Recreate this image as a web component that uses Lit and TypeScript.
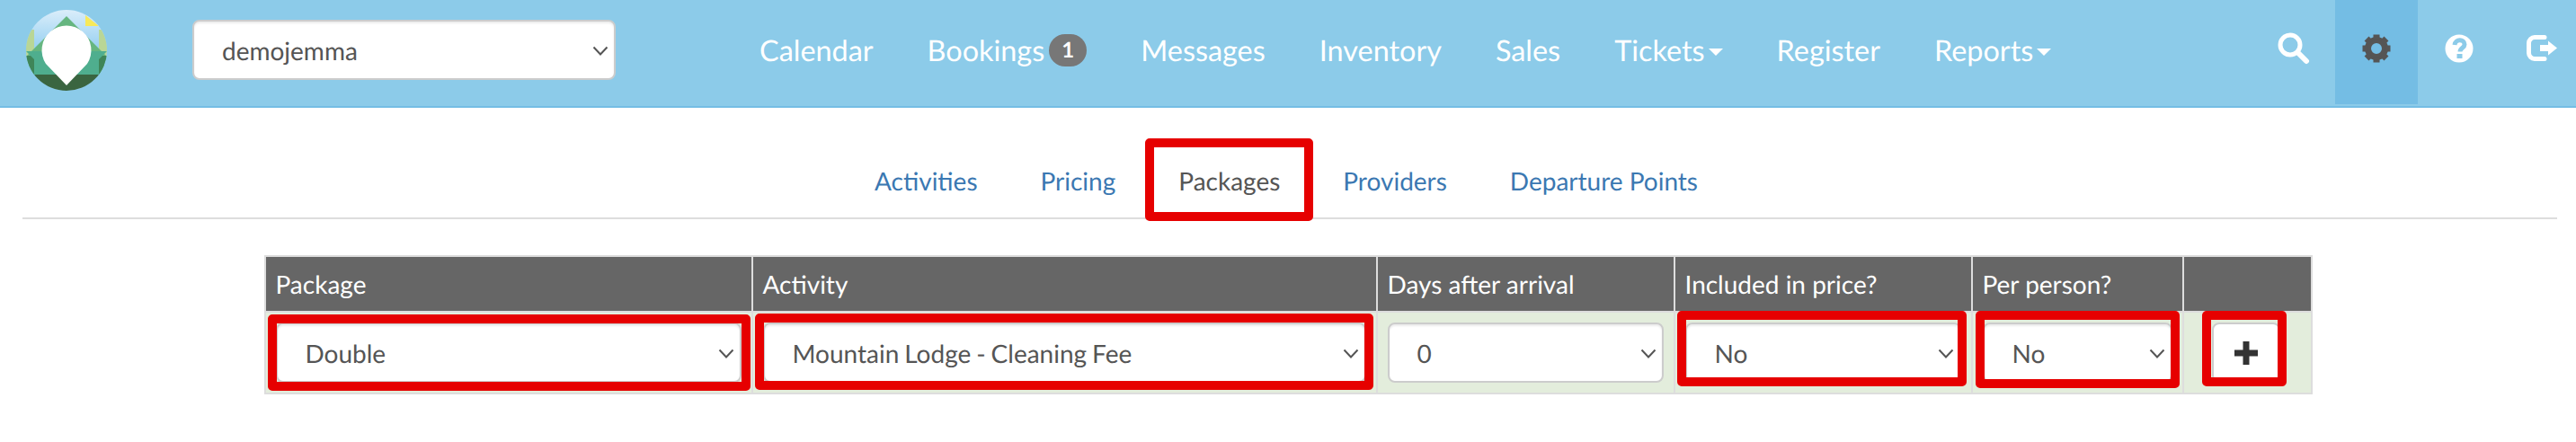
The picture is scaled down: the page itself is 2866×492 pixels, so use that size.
import { LitElement, html, css, svg } from 'lit';
import { customElement } from 'lit/decorators.js';

const chevron = html`<svg class="chev" width="18" height="11" viewBox="0 0 18 11"><path d="M1.5 1.5 9 9.5l7.5-8" fill="none" stroke="#555" stroke-width="2"/></svg>`;

const gearTeeth = [0, 45, 90, 135, 180, 225, 270, 315];

@customElement('app-root')
export class AppRoot extends LitElement {
    static styles = css`
        :host {
            display: block;
            width: 2866px;
            height: 492px;
            background: #fff;
            font-family: Lato, "Open Sans", sans-serif;
            color: #555;
            overflow: hidden;
            text-rendering: geometricPrecision;
        }
        .top {
            display: flex;
            align-items: flex-start;
            height: 118px;
            background: #8ccbe9;
            border-bottom: 2px solid #74bde4;
        }
        .logo {
            margin: 10px 0 0 28px;
            flex: none;
        }
        .account {
            margin: 22px 0 0 94px;
            width: 471px;
            height: 67px;
            flex: none;
        }
        .nav {
            display: flex;
            gap: 60px;
            margin: 33px 0 0 160px;
            color: #fff;
            font-size: 32.4px;
            line-height: 46px;
            white-space: nowrap;
        }
        .nav a {
            display: flex;
            align-items: center;
        }
        .badge {
            display: block;
            width: 42px;
            height: 36px;
            margin-left: 5px;
            border-radius: 18px;
            background: #777;
            color: #fff;
            font-size: 24px;
            font-weight: 700;
            line-height: 36px;
            text-align: center;
        }
        .caret {
            width: 0;
            height: 0;
            margin: 4px 0 0 4px;
            border-left: 8px solid transparent;
            border-right: 8px solid transparent;
            border-top: 8px solid #fff;
        }
        .icons {
            display: flex;
            flex: none;
            margin-left: auto;
            margin-right: -8px;
        }
        .icon {
            display: flex;
            width: 92px;
            height: 116px;
            padding-bottom: 8px;
            box-sizing: border-box;
            align-items: center;
            justify-content: center;
        }
        .icon.on {
            background: #74bde4;
        }
        .tabs {
            display: flex;
            align-items: flex-start;
            justify-content: center;
            gap: 70px;
            margin: 0 21px 0 25px;
            padding: 57px 8px 0 0;
            height: 65px;
            border-bottom: 2px solid #ddd;
            font-size: 28px;
            line-height: 48px;
            color: #3b78b2;
        }
        .tabs a {
            position: relative;
            white-space: nowrap;
        }
        .tabs a.on {
            color: #555;
        }
        .mark {
            position: absolute;
            border: 10px solid #e60000;
            border-radius: 5px;
            pointer-events: none;
        }
        .tabs .mark {
            left: -37px;
            right: -37px;
            top: -23px;
            bottom: -21px;
        }
        table {
            margin: 40px auto 0;
            width: 2279px;
            table-layout: fixed;
            border-collapse: collapse;
            font-size: 28px;
        }
        th, td {
            position: relative;
            border: 2px solid #ddd;
            padding: 0;
        }
        th {
            height: 60px;
            padding: 0 11px;
            background: #666;
            color: #fff;
            font-weight: 400;
            text-align: left;
            white-space: nowrap;
        }
        td {
            height: 89px;
            background: #e3eddc;
        }
        .select {
            position: relative;
            height: 67px;
        }
        td .select {
            margin: 0 11px;
        }
        select {
            display: block;
            width: 100%;
            height: 100%;
            box-sizing: border-box;
            padding: 0 31px;
            appearance: none;
            border: 2px solid #ccc;
            border-radius: 8px;
            background: #fff;
            box-shadow: inset 0 2px 2px rgba(0, 0, 0, 0.075);
            color: #555;
            font: inherit;
            font-size: 28px;
            text-rendering: inherit;
            word-spacing: -1.2px;
        }
        .chev {
            position: absolute;
            right: 8px;
            top: 29px;
        }
        .add {
            display: flex;
            width: 76px;
            height: 67px;
            margin-left: 31px;
            box-sizing: border-box;
            align-items: center;
            justify-content: center;
            border: 2px solid #ccc;
            border-radius: 8px;
            background: #fff;
        }
        .m-package { left: 2px; right: 1px; top: 2px; bottom: 2px; }
        .m-activity { left: 2px; right: 3px; top: 1px; bottom: 3px; }
        .m-included { left: 2px; right: 5px; top: -2px; bottom: 7px; }
        .m-person { left: 3px; right: 3px; top: -2px; bottom: 5px; }
        .m-add { left: 20px; right: 27px; top: -2px; bottom: 7px; }
    `;

    renderSelect(value: string) {
        return html`<div class="select"><select><option>${value}</option></select>${chevron}</div>`;
    }

    render() {
        return html`
            <div class="top">
                <svg class="logo" width="92" height="92" viewBox="28 10 92 92">
                    <defs>
                        <clipPath id="round"><circle cx="74" cy="56" r="45"/></clipPath>
                        <linearGradient id="sky" x1="0" y1="0" x2="0" y2="1">
                            <stop offset="0" stop-color="#dceefa"/>
                            <stop offset="0.45" stop-color="#9bd2f2"/>
                        </linearGradient>
                    </defs>
                    <g clip-path="url(#round)">
                        <rect x="28" y="10" width="92" height="92" fill="url(#sky)"/>
                        <rect x="28" y="33" width="10" height="30" fill="#b9d696"/>
                        <rect x="110" y="33" width="10" height="30" fill="#b9d696"/>
                        <path d="M95 17l15 12H95z" fill="#f7e95a"/>
                        <path d="M74 18l45 45-5 20H34l-5-20z" fill="#66b680"/>
                        <rect x="28" y="62" width="10" height="30" fill="#3f8558"/>
                        <rect x="110" y="62" width="10" height="30" fill="#3f8558"/>
                        <path d="M38 66 29 57h90l-9 9v17H38z" fill="#4fae8e"/>
                        <rect x="28" y="83" width="92" height="20" fill="#3a6540"/>
                    </g>
                    <path d="M74 95 51 71a27.5 27.5 0 1 1 46 0z" fill="#fff"/>
                </svg>
                <div class="account select">
                    <select><option>demojemma</option></select>
                    ${chevron}
                </div>
                <div class="nav">
                    <a>Calendar</a>
                    <a>Bookings<span class="badge">1</span></a>
                    <a>Messages</a>
                    <a>Inventory</a>
                    <a>Sales</a>
                    <a>Tickets<span class="caret"></span></a>
                    <a>Register</a>
                    <a>Reports<span class="caret"></span></a>
                </div>
                <div class="icons">
                    <div class="icon">
                        <svg width="36" height="36" viewBox="0 0 36 36">
                            <circle cx="14" cy="14" r="11" fill="none" stroke="#fff" stroke-width="5"/>
                            <path d="M23 23l9 9" stroke="#fff" stroke-width="6" stroke-linecap="round"/>
                        </svg>
                    </div>
                    <div class="icon on">
                        <svg width="32" height="32" viewBox="-16 -16 32 32">
                            <circle r="9.5" fill="none" stroke="#555" stroke-width="7"/>
                            ${gearTeeth.map(a => svg`<rect x="-3.5" y="-15.5" width="7" height="6" fill="#555" transform="rotate(${a})"/>`)}
                        </svg>
                    </div>
                    <div class="icon">
                        <svg width="32" height="32" viewBox="-16 -16 32 32">
                            <circle r="15.5" fill="#fff"/>
                            <path d="M-5-4c.5-7 11-7 11-.5 0 4-5 3.500-5 8" fill="none" stroke="#8ccbe9" stroke-width="5"/>
                            <rect x="-2.500" y="6" width="6" height="5" fill="#8ccbe9"/>
                        </svg>
                    </div>
                    <div class="icon">
                        <svg width="34" height="30" viewBox="0 0 34 30">
                            <path d="M20 2.500H9a6.500 6.500 0 0 0-6.500 6.500v11A6.500 6.500 0 0 0 9 26.500h11" fill="none" stroke="#fff" stroke-width="5" stroke-linecap="round"/>
                            <path d="M15 11h9V6.500l10 8-10 8V18h-9z" fill="#fff"/>
                        </svg>
                    </div>
                </div>
            </div>

            <div class="tabs">
                <a>Activities</a>
                <a>Pricing</a>
                <a class="on">Packages<span class="mark"></span></a>
                <a>Providers</a>
                <a>Departure Points</a>
            </div>

            <table>
                <colgroup>
                    <col style="width:542px"><col style="width:695px"><col style="width:331px">
                    <col style="width:331px"><col style="width:235px"><col style="width:143px">
                </colgroup>
                <thead>
                    <tr>
                        <th>Package</th>
                        <th>Activity</th>
                        <th>Days after arrival</th>
                        <th>Included in price?</th>
                        <th>Per person?</th>
                        <th></th>
                    </tr>
                </thead>
                <tbody>
                    <tr>
                        <td>${this.renderSelect('Double')}<span class="mark m-package"></span></td>
                        <td>${this.renderSelect('Mountain Lodge - Cleaning Fee')}<span class="mark m-activity"></span></td>
                        <td>${this.renderSelect('0')}</td>
                        <td>${this.renderSelect('No')}<span class="mark m-included"></span></td>
                        <td>${this.renderSelect('No')}<span class="mark m-person"></span></td>
                        <td>
                            <div class="add">
                                <svg width="26" height="26" viewBox="0 0 26 26"><path d="M9.500 0h7v9.500H26v7h-9.500V26h-7v-9.500H0v-7h9.500z" fill="#333"/></svg>
                            </div>
                            <span class="mark m-add"></span>
                        </td>
                    </tr>
                </tbody>
            </table>
        `;
    }
}
